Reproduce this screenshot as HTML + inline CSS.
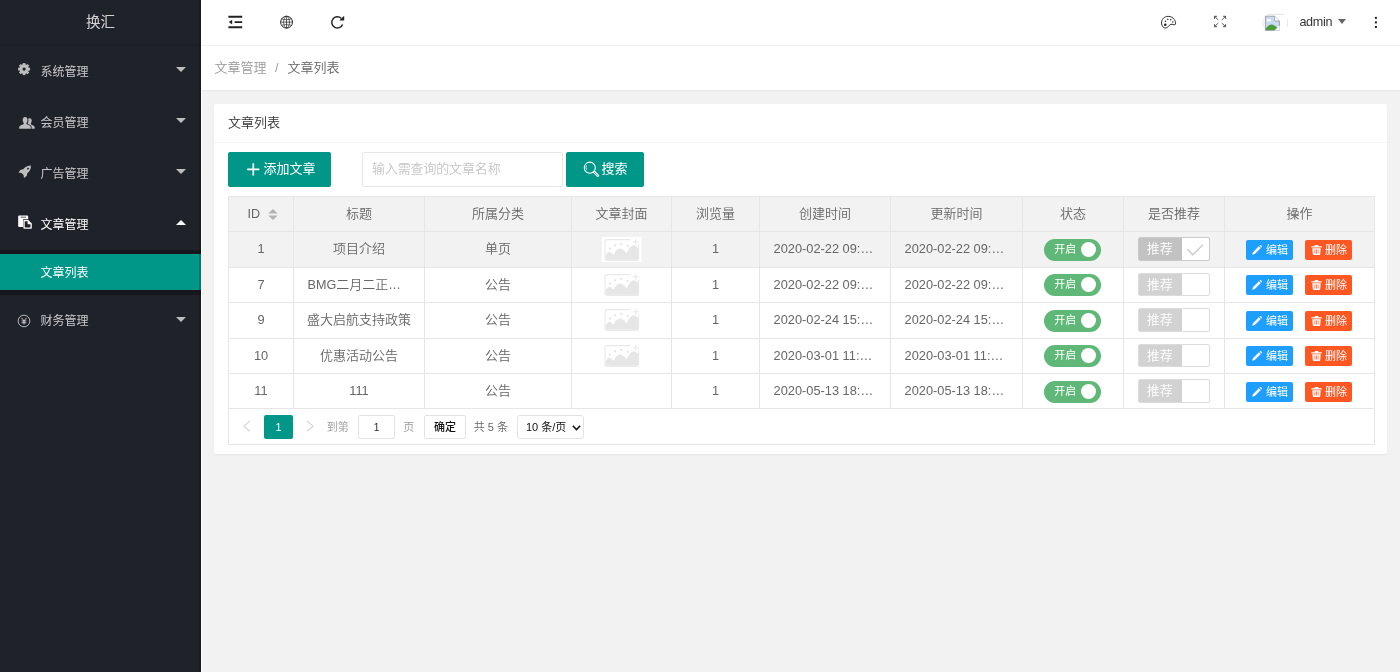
<!DOCTYPE html>
<html lang="zh-CN">
<head>
<meta charset="utf-8">
<title>换汇</title>
<style>
*{box-sizing:border-box;margin:0;padding:0}
html,body{width:1400px;height:672px;overflow:hidden}
body{position:relative;background:#f2f2f2;color:#666;font-family:"Liberation Sans","Noto Sans CJK SC",sans-serif;font-size:12.6px;line-height:1;font-weight:350}
.abs{position:absolute}
svg{display:block;position:absolute;overflow:visible}
/* ---------- side ---------- */
#side{position:absolute;left:0;top:0;width:201px;height:672px;background:#20222A;overflow:hidden;font-weight:400}
#side .edge{position:absolute;left:199px;top:0;width:2px;height:672px;background:rgba(0,0,0,.18)}
#whitecol{position:absolute;left:201px;top:0;width:1px;height:672px;background:#fff}
#logo{position:absolute;left:0;top:0;width:201px;height:44px;line-height:45px;text-align:center;color:rgba(255,255,255,.8);font-size:14.6px;box-shadow:0 1px 2px 0 rgba(0,0,0,.15)}
.nav{position:absolute;left:0;width:201px;height:51px;color:rgba(255,255,255,.75);font-size:12px}
.nav .t{position:absolute;left:40.6px;top:1.6px;line-height:51px;white-space:nowrap}
.nav .more{position:absolute;left:176.3px;top:22.4px;width:0;height:0;border-style:solid;border-width:5.6px 5.4px 0 5.4px;border-color:rgba(255,255,255,.7) transparent transparent transparent}
.nav.on{color:#fff}
.nav.on .more{border-width:0 5.4px 5.6px 5.4px;border-color:transparent transparent #fff transparent;top:22px}
#child{position:absolute;left:0;top:249.5px;width:201px;height:45px;background:rgba(0,0,0,.3)}
#child .this{position:absolute;left:0;top:4.5px;width:201px;height:36px;background:#009688;color:#fff;font-size:12px;line-height:36px;padding-left:40.6px;padding-top:1.2px}
/* ---------- header ---------- */
#header{position:absolute;left:202px;top:0;width:1198px;height:46px;background:#fff;border-bottom:1px solid #f0f0f0}
#crumb{position:absolute;left:202px;top:46px;width:1198px;height:44px;background:#fff;box-shadow:0 1px 2px 0 rgba(0,0,0,.05);font-size:13px;line-height:44px;white-space:nowrap}
#crumb span{position:absolute;top:0}
/* ---------- card ---------- */
#card{position:absolute;left:214px;top:104px;width:1173px;height:350px;background:#fff;border-radius:2px;box-shadow:0 1px 2px 0 rgba(0,0,0,.05)}
#card .hd{position:absolute;left:0;top:0;width:100%;height:38.5px;border-bottom:1px solid #f6f6f6;line-height:38px;padding-left:14px;color:#333;font-size:13px}
.btn{font-weight:400;position:absolute;height:34.3px;background:#009688;border-radius:2px;color:#fff;font-size:13px;line-height:34.3px;white-space:nowrap}

/* ---------- toolbar ---------- */
.btn svg{stroke:#fff;fill:none}
#q{letter-spacing:-.15px;position:absolute;left:148px;top:48px;width:201px;height:34.5px;border:1px solid #e6e6e6;border-radius:2px;background:#fff;color:#c4c4c4;font-size:13px;line-height:32.5px;padding-left:9px;white-space:nowrap}
/* ---------- table ---------- */
#tb{position:absolute;left:14px;top:92px;width:1147px;border-collapse:separate;border-spacing:0;table-layout:fixed;border-left:1px solid #e6e6e6;border-top:1px solid #e6e6e6;color:#666}
#tb th,#tb td{border-right:1px solid #e6e6e6;border-bottom:1px solid #e6e6e6;text-align:center;font-weight:inherit;white-space:nowrap;overflow:hidden;position:relative;padding:0;vertical-align:middle}
#tb th{background:#f2f2f2;font-size:13px;height:35px;padding-bottom:1.4px}
#tb td{font-size:12.8px}
#tb td.c{font-size:13px;padding-bottom:1.4px}
#tb td.d{text-align:left;padding-left:13.6px}
#tb tr.hv td{background:#f2f2f2}
.sw{position:absolute;left:21.2px;width:56.7px;height:21.6px;border-radius:11px;background:#5FB878;color:#fff;font-size:11px;line-height:21.6px;text-align:left;padding-left:10px}
.sw i{position:absolute;right:4.5px;top:3.2px;width:15.2px;height:15.2px;border-radius:50%;background:#fff}
.ck{position:absolute;left:14px;width:72px;height:23.6px;border:1px solid #dcdcdc;border-radius:2px;background:#fff;overflow:hidden}
.ck span{position:absolute;left:-1px;top:-1px;width:43.6px;height:23.6px;background:#d2d2d2;color:#fff;font-size:13px;line-height:23px;text-align:center}
.hv .ck{border-color:#cacaca}.hv .ck span{background:#c2c2c2}
.sw,.b1,.b2{font-weight:400}
.b1,.b2{position:absolute;height:20px;width:46.8px;border-radius:2px;color:#fff;font-size:11px;line-height:20px;text-align:left}
.b1{left:21px;background:#1E9FFF;padding-left:20px}
.b2{left:80.1px;background:#FF5722;padding-left:20px}
/* ---------- pager ---------- */
#pg{position:absolute;left:14px;top:304px;width:1147px;height:37px;border:1px solid #e6e6e6;border-top:none;font-size:11px;color:#999}
#pg>*{position:absolute}
#pg .cur{left:35.1px;top:6.9px;width:28.6px;height:24.1px;border-radius:2px;background:#009688;color:#fff;text-align:center;line-height:24px;font-size:10.8px}
#pg .box{top:7.1px;height:23.6px;border:1px solid #e2e2e2;border-radius:2px;background:#fff;color:#333;text-align:center;line-height:23.4px}
#side,#header,#crumb,#card{will-change:transform}
</style>
</head>
<body>
<div id="side">
  <div id="logo">换汇</div>
  <div class="nav" style="top:45px"><svg style="left:17.7px;top:17.75px" width="12.2" height="12.2" viewBox="-6.5 -6.5 13 13"><g fill="#bcbdbf"><rect x="-1.45" y="-6.4" width="2.9" height="3.2" transform="rotate(0)"/><rect x="-1.45" y="-6.4" width="2.9" height="3.2" transform="rotate(45)"/><rect x="-1.45" y="-6.4" width="2.9" height="3.2" transform="rotate(90)"/><rect x="-1.45" y="-6.4" width="2.9" height="3.2" transform="rotate(135)"/><rect x="-1.45" y="-6.4" width="2.9" height="3.2" transform="rotate(180)"/><rect x="-1.45" y="-6.4" width="2.9" height="3.2" transform="rotate(225)"/><rect x="-1.45" y="-6.4" width="2.9" height="3.2" transform="rotate(270)"/><rect x="-1.45" y="-6.4" width="2.9" height="3.2" transform="rotate(315)"/><circle r="5.1"/></g><circle r="1.7" fill="#20222A"/></svg><span class="t">系统管理</span><i class="more"></i></div>
  <div class="nav" style="top:96px"><svg style="left:18.5px;top:20.599999999999994px" width="16" height="12" viewBox="0 0 16 12"><g fill="rgba(255,255,255,.7)"><path d="M6.1 0C7.8 0 8.6 1.4 8.5 3.2C8.4 4.8 7.8 5.6 7.4 6.2C7.3 6.9 7.6 7.2 8.4 7.6C10 8.3 11.6 8.8 11.8 10.2V11.8H0.2V10.2C0.4 8.8 2.2 8.3 3.8 7.6C4.6 7.2 4.9 6.9 4.8 6.2C4.4 5.6 3.8 4.8 3.7 3.2C3.6 1.4 4.4 0 6.1 0Z"/><path d="M10.6 1.2C12.1 1.2 12.8 2.4 12.7 4C12.6 5.3 12.1 6 11.8 6.6C11.7 7.1 12 7.4 12.6 7.7C14 8.3 15.5 8.8 15.7 10.2V11.8H12.6V10.1C12.4 8.6 11 7.9 9.6 7.3C9.2 7.1 8.7 6.9 8.6 6.5C9 5.9 9.4 5 9.4 3.3C9.4 2.6 9.3 2.1 9.1 1.7C9.5 1.4 10 1.2 10.6 1.2Z"/></g></svg><span class="t">会员管理</span><i class="more"></i></div>
  <div class="nav" style="top:147px"><svg style="left:17.7px;top:17.5px" width="13.5" height="13.5" viewBox="0 0 14 14"><path fill="rgba(255,255,255,.7)" fill-rule="evenodd" d="M13.4 0.4C13.6 3.4 12.4 6.4 9.6 8.6L9.2 11.2L6.2 13.6L5.8 10.4L3.6 8.2L0.4 7.8L2.8 4.8L5.4 4.4C7.6 1.6 10.4 0.4 13.4 0.4Z M10.4 2.8A0.9 0.9 0 1 0 10.401 2.8Z"/></svg><span class="t">广告管理</span><i class="more"></i></div>
  <div class="nav on" style="top:198px"><svg style="left:17.6px;top:16.8px" width="14.4" height="14.4" viewBox="0 0 15 15"><path fill="#fff" fill-rule="evenodd" d="M1.2 0.4H9.6Q10.6 0.4 10.6 1.4V4.2H6.2Q5.2 4.2 5.2 5.2V12.4H1.2Q0.2 12.4 0.2 11.4V1.4Q0.2 0.4 1.2 0.4Z M2.6 1.8H8.4V2.5H2.6Z"/><path fill="#fff" fill-rule="evenodd" d="M6.4 5H10.6L14.4 8.8V13.6Q14.4 14.4 13.6 14.4H6.4Q5.6 14.4 5.6 13.6V5.8Q5.6 5 6.4 5Z M7 6.4V13H13V9.6H10V6.4Z"/></svg><span class="t">文章管理</span><i class="more"></i></div>
  <div id="child"><div class="this">文章列表</div></div>
  <div class="nav" style="top:294.5px"><svg style="left:17.05px;top:19.55px" width="14" height="14" viewBox="0 0 14 14"><g fill="none" stroke="rgba(255,255,255,.7)"><circle cx="7" cy="7" r="5.85" stroke-width="0.95"/><path d="M4.5 3.8L7 6.9L9.5 3.8M7 6.9V10.5M4.7 6.9H9.3M4.7 8.7H9.3" stroke-width="1"/></g></svg><span class="t">财务管理</span><i class="more"></i></div>
  <div class="edge"></div>
</div>
<div id="whitecol"></div>
<div id="header"><svg style="left:26px;top:15px" width="15" height="14" viewBox="0 0 15 14"><path d="M0.4 1.8H14.2M6.6 7.1H14.2M0.4 12.2H14.2" stroke="#222" stroke-width="1.9" fill="none"/><path d="M0.8 7.1L4.2 4.7V9.5Z" fill="#222"/></svg><svg style="left:77px;top:15px" width="15" height="15" viewBox="0 0 15 15"><g fill="none" stroke="#2a2a2a"><circle cx="7.55" cy="7.15" r="5.95" stroke-width="1"/><ellipse cx="7.55" cy="7.15" rx="2.9" ry="5.9" stroke-width="0.7"/><path d="M7.55 1.2V13.1M1.6 7.15H13.5" stroke-width="0.75"/><path d="M2.7 4.1Q7.55 5.3 12.4 4.1M2.7 10.2Q7.55 9 12.4 10.2" stroke-width="0.65"/></g></svg><svg style="left:128px;top:15px" width="15" height="15" viewBox="0 0 15 15"><path d="M12.6 9.4A5.6 5.6 0 1 1 11.2 3.3" fill="none" stroke="#222" stroke-width="1.5"/><path d="M14.2 0.8V5.6H9.2Z" fill="#222"/></svg><svg style="left:958px;top:15.3px" width="17" height="14.6" viewBox="0 0 17 15"><path d="M8.2 1.4C4 1.4 1.3 4.6 1.3 8.2C1.3 11.4 3.4 13.6 5.6 13.4C7.8 13.2 8.6 10.6 11 9.6C12.6 9 13.8 10.6 15.2 10C16.2 9.5 16 7 14.6 4.8C13.2 2.6 10.8 1.4 8.2 1.4Z" fill="none" stroke="#222" stroke-width="0.95"/><circle cx="5.2" cy="10" r="1.3" fill="#222"/><circle cx="5.4" cy="6.4" r="0.75" fill="#222"/><circle cx="7.8" cy="4.4" r="0.75" fill="#222"/><circle cx="10.8" cy="4.8" r="0.75" fill="#222"/><circle cx="12.9" cy="7.2" r="0.75" fill="#222"/></svg><svg style="left:1011px;top:15px" width="14" height="13" viewBox="0 0 14 13"><g fill="none" stroke="#444" stroke-width="0.9"><path d="M1.5 1.3L5.3 5M1.5 3.9V1.3H4.1"/><path d="M12.6 1.3L8.8 5M10 1.3H12.6V3.9"/><path d="M1.5 11.7L5.3 8M1.5 9.1V11.7H4.1"/><path d="M12.6 11.7L8.8 8M10 11.7H12.6V9.1"/></g></svg><svg style="left:1060px;top:13px" width="28" height="20" viewBox="0 0 28 20"><path d="M5 1.4H22" stroke="#ddd" stroke-width="0.8" fill="none"/><path d="M1.3 6Q0.6 10 1.3 14M25.3 6Q26 10 25.3 14" stroke="#e4e4e4" stroke-width="0.8" fill="none"/><path d="M3.4 3.2H12.6L17.4 8V17.4H3.4Z" fill="#c9daf5" stroke="#9a9a9a" stroke-width="0.9"/><path d="M12.6 3.2V8H17.4" fill="#fff" stroke="#9a9a9a" stroke-width="0.8"/><ellipse cx="7" cy="7.2" rx="2.3" ry="1.3" fill="#fff"/><path d="M3.8 15.4Q7.5 10.6 11 11.8Q14.5 13 17 17H3.8Z" fill="#4d9e3a"/><path d="M12.5 17.6L17.6 12.5V17.6Z" fill="#fff"/></svg><span style="position:absolute;left:1097.4px;top:0;line-height:45px;color:#333;font-size:12.6px;letter-spacing:-0.3px">admin</span><i style="position:absolute;left:1135.7px;top:19.3px;width:0;height:0;border-style:solid;border-width:5.2px 4.7px 0 4.7px;border-color:#666 transparent transparent transparent"></i><svg style="left:1171px;top:15px" width="6" height="14" viewBox="0 0 6 14"><g fill="#222"><rect x="1.9" y="1.9" width="2" height="2"/><rect x="1.9" y="6.4" width="2" height="2"/><rect x="1.9" y="11" width="2" height="2"/></g></svg></div>
<div id="crumb"><span style="left:12.6px;color:#999">文章管理</span><span style="left:73px;color:#999;font-size:12.6px">/</span><span style="left:85.5px;color:#666">文章列表</span></div>
<div id="card">
  <div class="hd">文章列表</div>
  <div class="btn" style="left:14px;top:48.3px;width:103.3px;padding-left:35.5px"><svg style="left:18.7px;top:11px" width="12.6" height="12.6" viewBox="0 0 12.6 12.6"><path d="M6.3 0.2V12.4M0.2 6.3H12.4" stroke-width="1.7"/></svg>添加文章</div>
  <div id="q">输入需查询的文章名称</div>
  <div class="btn" style="left:352px;top:48.3px;width:77.8px;padding-left:35.6px"><svg style="left:0;top:0" width="40" height="34" viewBox="0 0 40 34"><circle cx="23.8" cy="15.7" r="5.55" stroke-width="1.1"/><path d="M20.4 13.6A3.6 3.6 0 0 0 20.6 17.6" stroke-width="0.9"/><path d="M28.2 20L31.8 23.6" stroke-width="2.7" stroke-linecap="round"/><path d="M28.4 20.2L31.6 23.4" stroke="#009688" stroke-width="0.8" stroke-linecap="round"/></svg>搜索</div>
<table id="tb"><colgroup><col style="width:65px"><col style="width:131px"><col style="width:147px"><col style="width:100px"><col style="width:88px"><col style="width:131px"><col style="width:132px"><col style="width:101px"><col style="width:101px"><col style="width:150px"></colgroup><tr><th style="text-align:left;padding-left:18.4px;font-size:12.6px;padding-bottom:0">ID<svg style="left:39.1px;top:12px" width="10" height="12" viewBox="0 0 10 12"><path d="M0.3 4.4L5 0L9.7 4.4Z M0.3 6.6L5 11L9.7 6.6Z" fill="#b2b2b2"/></svg></th><th>标题</th><th>所属分类</th><th>文章封面</th><th>浏览量</th><th>创建时间</th><th>更新时间</th><th>状态</th><th>是否推荐</th><th>操作</th></tr><tr class="hv" style="height:36px"><td>1</td><td class="c">项目介绍</td><td class="c">单页</td><td><svg style="left:30px;top:4.6px" width="40" height="25" viewBox="0 0 40 25"><rect x="0" y="0" width="39.5" height="25" fill="#fff"/><rect x="3" y="2.6" width="33.6" height="20.8" rx="2.2" fill="none" stroke="#e9e9e9" stroke-width="1.1"/><path d="M3.6 21V19Q6 13.5 8.6 15.2Q10.6 16.8 11.6 17.8Q15 10 19.5 11.8Q23 13.6 24.6 16.6Q27 10.6 30.5 8.6Q33.6 7.6 36 11V21.4Q36 22.8 34.6 22.8H5Q3.6 22.8 3.6 21Z" fill="#e6e6e6"/><circle cx="8" cy="11.6" r="1.1" fill="#e2e2e2"/><circle cx="13.2" cy="8.3" r="1.1" fill="#e2e2e2"/><circle cx="19.2" cy="6.8" r="1.1" fill="#e2e2e2"/><circle cx="25.6" cy="8.8" r="1.1" fill="#e2e2e2"/><rect x="28" y="1" width="9" height="7" fill="#fff"/><path d="M33.8 1.6V8M30.8 4.8H36.8" stroke="#e4e4e4" stroke-width="0.8" fill="none"/></svg></td><td>1</td><td class="d">2020-02-22 09:…</td><td class="d">2020-02-22 09:…</td><td><div class="sw" style="top:7px">开启<i></i></div></td><td><div class="ck" style="top:5px"><span>推荐</span><svg style="left:48px;top:6px" width="17" height="12" viewBox="0 0 17 12"><path d="M0.5 5.2L5.8 10.8L16 0.6" fill="none" stroke="#c2c2c2" stroke-width="1.2"/></svg></div></td><td><div class="b1" style="top:8px"><svg style="left:6.4px;top:5.2px" width="10" height="10" viewBox="0 0 10 10"><path d="M0.2 9.8L0.9 7.2L6.9 1.2L8.8 3.1L2.8 9.1Z M7.5 0.6L8.1 0.1Q8.6 -0.2 9.1 0.3L9.7 0.9Q10.2 1.4 9.8 1.9L9.3 2.5Z" fill="#fff"/></svg>编辑</div><div class="b2" style="top:8px"><svg style="left:6px;top:5px" width="11" height="10" viewBox="0 0 11 10"><path d="M0.3 1.3H3.6V0.4Q3.6 0 4 0H7Q7.4 0 7.4 0.4V1.3H10.7V2.5H0.3Z M1.3 3.3H9.7L9.2 9.2Q9.1 10 8.3 10H2.7Q1.9 10 1.8 9.2Z" fill="#fff"/><path d="M3.9 4.4V8.6M5.5 4.4V8.6M7.1 4.4V8.6" stroke="#FF5722" stroke-width="0.7"/></svg>删除</div></td></tr><tr class="" style="height:35px"><td>7</td><td class="c" style="text-align:left;padding-left:13.6px"><span style="font-size:12.6px">BMG</span>二月二正<span style="font-size:12.6px">…</span></td><td class="c">公告</td><td><svg style="left:30px;top:4.4px" width="40" height="25" viewBox="0 0 40 25"><rect x="0" y="0" width="39.5" height="25" fill="#fff"/><rect x="3" y="2.6" width="33.6" height="20.8" rx="2.2" fill="none" stroke="#e9e9e9" stroke-width="1.1"/><path d="M3.6 21V19Q6 13.5 8.6 15.2Q10.6 16.8 11.6 17.8Q15 10 19.5 11.8Q23 13.6 24.6 16.6Q27 10.6 30.5 8.6Q33.6 7.6 36 11V21.4Q36 22.8 34.6 22.8H5Q3.6 22.8 3.6 21Z" fill="#e6e6e6"/><circle cx="8" cy="11.6" r="1.1" fill="#e2e2e2"/><circle cx="13.2" cy="8.3" r="1.1" fill="#e2e2e2"/><circle cx="19.2" cy="6.8" r="1.1" fill="#e2e2e2"/><circle cx="25.6" cy="8.8" r="1.1" fill="#e2e2e2"/><rect x="28" y="1" width="9" height="7" fill="#fff"/><path d="M33.8 1.6V8M30.8 4.8H36.8" stroke="#e4e4e4" stroke-width="0.8" fill="none"/></svg></td><td>1</td><td class="d">2020-02-22 09:…</td><td class="d">2020-02-22 09:…</td><td><div class="sw" style="top:6px">开启<i></i></div></td><td><div class="ck" style="top:5px;height:23px"><span>推荐</span></div></td><td><div class="b1" style="top:7.3px"><svg style="left:6.4px;top:5.2px" width="10" height="10" viewBox="0 0 10 10"><path d="M0.2 9.8L0.9 7.2L6.9 1.2L8.8 3.1L2.8 9.1Z M7.5 0.6L8.1 0.1Q8.6 -0.2 9.1 0.3L9.7 0.9Q10.2 1.4 9.8 1.9L9.3 2.5Z" fill="#fff"/></svg>编辑</div><div class="b2" style="top:7.3px"><svg style="left:6px;top:5px" width="11" height="10" viewBox="0 0 11 10"><path d="M0.3 1.3H3.6V0.4Q3.6 0 4 0H7Q7.4 0 7.4 0.4V1.3H10.7V2.5H0.3Z M1.3 3.3H9.7L9.2 9.2Q9.1 10 8.3 10H2.7Q1.9 10 1.8 9.2Z" fill="#fff"/><path d="M3.9 4.4V8.6M5.5 4.4V8.6M7.1 4.4V8.6" stroke="#FF5722" stroke-width="0.7"/></svg>删除</div></td></tr><tr class="" style="height:36px"><td>9</td><td class="c">盛大启航支持政策</td><td class="c">公告</td><td><svg style="left:30px;top:4.4px" width="40" height="25" viewBox="0 0 40 25"><rect x="0" y="0" width="39.5" height="25" fill="#fff"/><rect x="3" y="2.6" width="33.6" height="20.8" rx="2.2" fill="none" stroke="#e9e9e9" stroke-width="1.1"/><path d="M3.6 21V19Q6 13.5 8.6 15.2Q10.6 16.8 11.6 17.8Q15 10 19.5 11.8Q23 13.6 24.6 16.6Q27 10.6 30.5 8.6Q33.6 7.6 36 11V21.4Q36 22.8 34.6 22.8H5Q3.6 22.8 3.6 21Z" fill="#e6e6e6"/><circle cx="8" cy="11.6" r="1.1" fill="#e2e2e2"/><circle cx="13.2" cy="8.3" r="1.1" fill="#e2e2e2"/><circle cx="19.2" cy="6.8" r="1.1" fill="#e2e2e2"/><circle cx="25.6" cy="8.8" r="1.1" fill="#e2e2e2"/><rect x="28" y="1" width="9" height="7" fill="#fff"/><path d="M33.8 1.6V8M30.8 4.8H36.8" stroke="#e4e4e4" stroke-width="0.8" fill="none"/></svg></td><td>1</td><td class="d">2020-02-24 15:…</td><td class="d">2020-02-24 15:…</td><td><div class="sw" style="top:7px">开启<i></i></div></td><td><div class="ck" style="top:5px"><span>推荐</span></div></td><td><div class="b1" style="top:8px"><svg style="left:6.4px;top:5.2px" width="10" height="10" viewBox="0 0 10 10"><path d="M0.2 9.8L0.9 7.2L6.9 1.2L8.8 3.1L2.8 9.1Z M7.5 0.6L8.1 0.1Q8.6 -0.2 9.1 0.3L9.7 0.9Q10.2 1.4 9.8 1.9L9.3 2.5Z" fill="#fff"/></svg>编辑</div><div class="b2" style="top:8px"><svg style="left:6px;top:5px" width="11" height="10" viewBox="0 0 11 10"><path d="M0.3 1.3H3.6V0.4Q3.6 0 4 0H7Q7.4 0 7.4 0.4V1.3H10.7V2.5H0.3Z M1.3 3.3H9.7L9.2 9.2Q9.1 10 8.3 10H2.7Q1.9 10 1.8 9.2Z" fill="#fff"/><path d="M3.9 4.4V8.6M5.5 4.4V8.6M7.1 4.4V8.6" stroke="#FF5722" stroke-width="0.7"/></svg>删除</div></td></tr><tr class="" style="height:35px"><td>10</td><td class="c">优惠活动公告</td><td class="c">公告</td><td><svg style="left:30px;top:4.4px" width="40" height="25" viewBox="0 0 40 25"><rect x="0" y="0" width="39.5" height="25" fill="#fff"/><rect x="3" y="2.6" width="33.6" height="20.8" rx="2.2" fill="none" stroke="#e9e9e9" stroke-width="1.1"/><path d="M3.6 21V19Q6 13.5 8.6 15.2Q10.6 16.8 11.6 17.8Q15 10 19.5 11.8Q23 13.6 24.6 16.6Q27 10.6 30.5 8.6Q33.6 7.6 36 11V21.4Q36 22.8 34.6 22.8H5Q3.6 22.8 3.6 21Z" fill="#e6e6e6"/><circle cx="8" cy="11.6" r="1.1" fill="#e2e2e2"/><circle cx="13.2" cy="8.3" r="1.1" fill="#e2e2e2"/><circle cx="19.2" cy="6.8" r="1.1" fill="#e2e2e2"/><circle cx="25.6" cy="8.8" r="1.1" fill="#e2e2e2"/><rect x="28" y="1" width="9" height="7" fill="#fff"/><path d="M33.8 1.6V8M30.8 4.8H36.8" stroke="#e4e4e4" stroke-width="0.8" fill="none"/></svg></td><td>1</td><td class="d">2020-03-01 11:…</td><td class="d">2020-03-01 11:…</td><td><div class="sw" style="top:6px">开启<i></i></div></td><td><div class="ck" style="top:5px;height:23px"><span>推荐</span></div></td><td><div class="b1" style="top:7.3px"><svg style="left:6.4px;top:5.2px" width="10" height="10" viewBox="0 0 10 10"><path d="M0.2 9.8L0.9 7.2L6.9 1.2L8.8 3.1L2.8 9.1Z M7.5 0.6L8.1 0.1Q8.6 -0.2 9.1 0.3L9.7 0.9Q10.2 1.4 9.8 1.9L9.3 2.5Z" fill="#fff"/></svg>编辑</div><div class="b2" style="top:7.3px"><svg style="left:6px;top:5px" width="11" height="10" viewBox="0 0 11 10"><path d="M0.3 1.3H3.6V0.4Q3.6 0 4 0H7Q7.4 0 7.4 0.4V1.3H10.7V2.5H0.3Z M1.3 3.3H9.7L9.2 9.2Q9.1 10 8.3 10H2.7Q1.9 10 1.8 9.2Z" fill="#fff"/><path d="M3.9 4.4V8.6M5.5 4.4V8.6M7.1 4.4V8.6" stroke="#FF5722" stroke-width="0.7"/></svg>删除</div></td></tr><tr class="" style="height:35px"><td>11</td><td class="">111</td><td class="c">公告</td><td></td><td>1</td><td class="d">2020-05-13 18:…</td><td class="d">2020-05-13 18:…</td><td><div class="sw" style="top:7px">开启<i></i></div></td><td><div class="ck" style="top:5px"><span>推荐</span></div></td><td><div class="b1" style="top:8px"><svg style="left:6.4px;top:5.2px" width="10" height="10" viewBox="0 0 10 10"><path d="M0.2 9.8L0.9 7.2L6.9 1.2L8.8 3.1L2.8 9.1Z M7.5 0.6L8.1 0.1Q8.6 -0.2 9.1 0.3L9.7 0.9Q10.2 1.4 9.8 1.9L9.3 2.5Z" fill="#fff"/></svg>编辑</div><div class="b2" style="top:8px"><svg style="left:6px;top:5px" width="11" height="10" viewBox="0 0 11 10"><path d="M0.3 1.3H3.6V0.4Q3.6 0 4 0H7Q7.4 0 7.4 0.4V1.3H10.7V2.5H0.3Z M1.3 3.3H9.7L9.2 9.2Q9.1 10 8.3 10H2.7Q1.9 10 1.8 9.2Z" fill="#fff"/><path d="M3.9 4.4V8.6M5.5 4.4V8.6M7.1 4.4V8.6" stroke="#FF5722" stroke-width="0.7"/></svg>删除</div></td></tr></table><div id="pg"><svg style="left:14.3px;top:12.3px" width="8" height="12" viewBox="0 0 8 12"><path d="M7 0.9L1 6.15L7 11.4" fill="none" stroke="#d2d2d2" stroke-width="1.1"/></svg><div class="cur">1</div><svg style="left:76.7px;top:12.3px" width="8" height="12" viewBox="0 0 8 12"><path d="M1 0.9L7 6.15L1 11.4" fill="none" stroke="#d2d2d2" stroke-width="1.1"/></svg>
<span style="left:97.8px;top:14px">到第</span><div class="box" style="left:129.3px;width:36.6px">1</div><span style="left:174.2px;top:14px">页</span>
<div class="box" style="left:195.3px;width:41.4px;color:#111;font-weight:500">确定</div><span style="left:244.8px;top:14px;color:#666">共 5 条</span>
<div class="box" style="left:288.4px;width:66.2px;border-radius:3px;color:#111;font-weight:400;text-align:left;padding-left:7.5px">10 条/页<svg style="left:54px;top:9px" width="9" height="6" viewBox="0 0 9 6"><path d="M0.8 0.8L4.5 4.6L8.2 0.8" fill="none" stroke="#111" stroke-width="1.5"/></svg></div></div>
</div>
</body>
</html>
